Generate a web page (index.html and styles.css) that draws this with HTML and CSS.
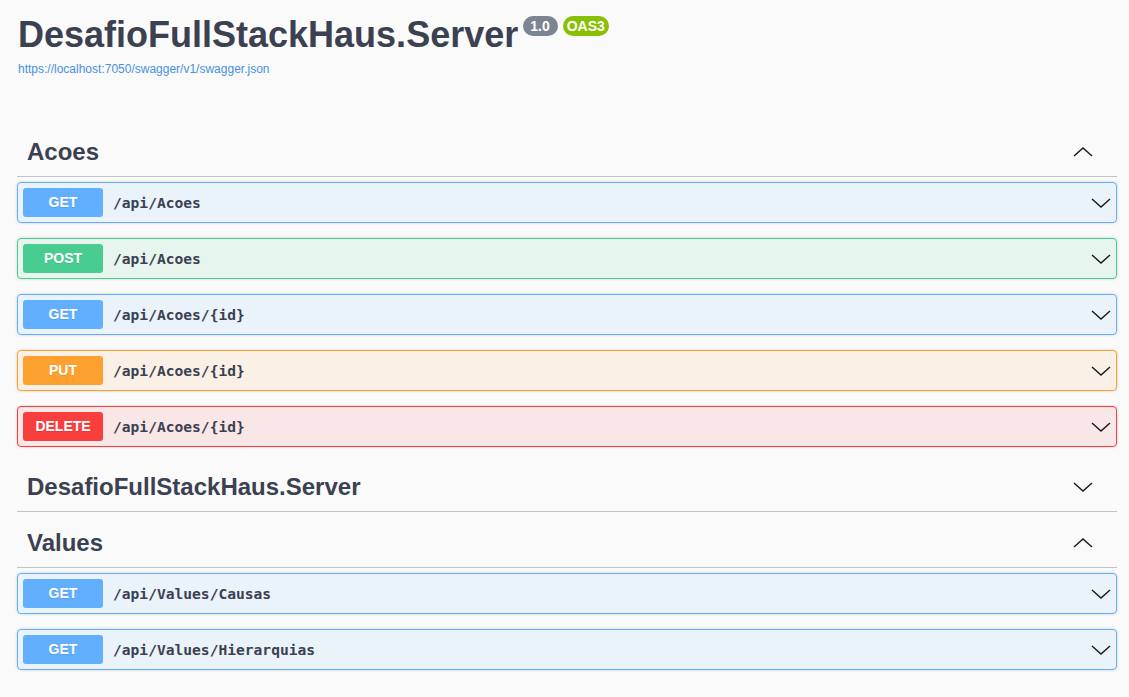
FILE: index.html
```html
<!DOCTYPE html>
<html lang="en">
<head>
<meta charset="utf-8">
<title>Swagger UI</title>
<link rel="stylesheet" href="styles.css">
</head>
<body>
<div class="wrapper">
  <div class="info">
    <h2 class="title">DesafioFullStackHaus.Server<span class="badge version">1.0</span><span class="badge oas">OAS3</span></h2>
    <a class="link" href="#">https://localhost:7050/swagger/v1/swagger.json</a>
  </div>

  <section class="tag-section">
    <h3 class="tag"><span class="tag-name">Acoes</span>
      <svg class="tag-arrow" width="20" height="10" viewBox="0 0 20 10"><polyline points="1,9 10,1 19,9"/></svg>
    </h3>
    <div class="opblock get"><div class="summary"><span class="method">GET</span><span class="path">/api/Acoes</span><svg class="op-arrow" width="20" height="10" viewBox="0 0 20 10"><polyline points="1,1 10,9 19,1"/></svg></div></div>
    <div class="opblock post"><div class="summary"><span class="method">POST</span><span class="path">/api/Acoes</span><svg class="op-arrow" width="20" height="10" viewBox="0 0 20 10"><polyline points="1,1 10,9 19,1"/></svg></div></div>
    <div class="opblock get"><div class="summary"><span class="method">GET</span><span class="path">/api/Acoes/{id}</span><svg class="op-arrow" width="20" height="10" viewBox="0 0 20 10"><polyline points="1,1 10,9 19,1"/></svg></div></div>
    <div class="opblock put"><div class="summary"><span class="method">PUT</span><span class="path">/api/Acoes/{id}</span><svg class="op-arrow" width="20" height="10" viewBox="0 0 20 10"><polyline points="1,1 10,9 19,1"/></svg></div></div>
    <div class="opblock delete"><div class="summary"><span class="method">DELETE</span><span class="path">/api/Acoes/{id}</span><svg class="op-arrow" width="20" height="10" viewBox="0 0 20 10"><polyline points="1,1 10,9 19,1"/></svg></div></div>
  </section>

  <section class="tag-section">
    <h3 class="tag"><span class="tag-name">DesafioFullStackHaus.Server</span>
      <svg class="tag-arrow" width="20" height="10" viewBox="0 0 20 10"><polyline points="1,1 10,9 19,1"/></svg>
    </h3>
  </section>

  <section class="tag-section values">
    <h3 class="tag"><span class="tag-name">Values</span>
      <svg class="tag-arrow" width="20" height="10" viewBox="0 0 20 10"><polyline points="1,9 10,1 19,9"/></svg>
    </h3>
    <div class="opblock get"><div class="summary"><span class="method">GET</span><span class="path">/api/Values/Causas</span><svg class="op-arrow" width="20" height="10" viewBox="0 0 20 10"><polyline points="1,1 10,9 19,1"/></svg></div></div>
    <div class="opblock get"><div class="summary"><span class="method">GET</span><span class="path">/api/Values/Hierarquias</span><svg class="op-arrow" width="20" height="10" viewBox="0 0 20 10"><polyline points="1,1 10,9 19,1"/></svg></div></div>
  </section>
</div>
</body>
</html>
```

FILE: styles.css
```css
html, body {
  margin: 0;
  padding: 0;
  background: #fafafa;
}

body {
  font-family: "Liberation Sans", Arial, sans-serif;
  color: #3b4151;
}

.wrapper {
  padding: 14px 12px 0 17px;
}

.info {
  padding-left: 1px;
  margin-bottom: 51px;
}

.title {
  display: flex;
  align-items: flex-start;
  margin: 0;
  font-size: 36px;
  font-weight: 700;
  line-height: normal;
  color: #3b4151;
}

.badge {
  display: inline-block;
  margin-top: 2px;
  margin-left: 5px;
  border-radius: 57px;
  font-size: 14px;
  font-weight: 700;
  line-height: 16px;
  color: #fff;
  padding: 2px 4px;
}

.badge.version {
  background: #7d8492;
  padding: 2px 8px 2px 7px;
}

.badge.oas {
  background: #89bf04;
  padding: 2px 4px 2px 4px;
}

.link {
  display: block;
  margin-top: 6px;
  font-size: 12px;
  line-height: normal;
  color: #4990e2;
  text-decoration: none;
}

.tag-section {
  display: flex;
  flex-direction: column;
}

.tag-section.values {
  margin-top: 1px;
}

.tag {
  display: flex;
  align-items: center;
  margin: 0 0 5px;
  padding: 10px 20px 10px 10px;
  border-bottom: 1px solid rgba(59, 65, 81, 0.3);
  font-size: 24px;
  font-weight: 700;
  line-height: 29px;
  color: #3b4151;
}

.tag-name {
  flex: 1;
}

.tag-arrow {
  margin-right: 4px;
  fill: none;
  stroke: #1b1b1b;
  stroke-width: 1.5;
}

.opblock {
  margin: 0 0 15px;
  border: 1px solid #000;
  border-radius: 4px;
  box-shadow: 0 0 3px rgba(0, 0, 0, 0.19);
}

.summary {
  display: flex;
  align-items: center;
  padding: 5px;
}

.method {
  min-width: 80px;
  padding: 6px 0;
  border-radius: 3px;
  text-align: center;
  font-size: 14px;
  font-weight: 700;
  line-height: 17px;
  color: #fff;
  text-shadow: 0 1px 0 rgba(0, 0, 0, 0.1);
}

.path {
  flex: 1;
  padding: 0 10px;
  font-family: "DejaVu Sans Mono", monospace;
  font-size: 14.6px;
  font-weight: 700;
  color: #3b4151;
}

.op-arrow {
  fill: none;
  stroke: #1b1b1b;
  stroke-width: 1.5;
}

.opblock.get { border-color: #61affe; background: rgba(97, 175, 254, 0.1); }
.opblock.get .method { background: #61affe; }

.opblock.post { border-color: #49cc90; background: rgba(73, 204, 144, 0.1); }
.opblock.post .method { background: #49cc90; }

.opblock.put { border-color: #fca130; background: rgba(252, 161, 48, 0.1); }
.opblock.put .method { background: #fca130; }

.opblock.delete { border-color: #f93e3e; background: rgba(249, 62, 62, 0.1); }
.opblock.delete .method { background: #f93e3e; }
```
